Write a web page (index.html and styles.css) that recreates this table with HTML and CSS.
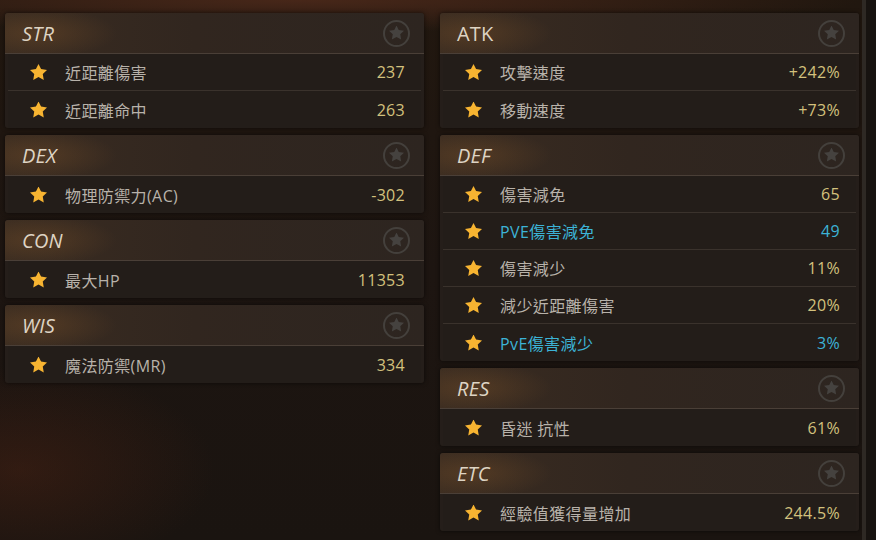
FILE: index.html
```html
<!DOCTYPE html>
<html lang="zh-Hant">
<head>
    <meta charset="UTF-8">
    <meta name="viewport" content="width=device-width, initial-scale=1.0">
    <title>能力值</title>
    <link rel="stylesheet" href="styles.css">
</head>
<body>
    <div class="screen">
        <main class="stats">
            <!-- Columna izquierda -->
            <div class="column">
                <section class="panel">
                    <div class="panel-head"><span class="title">STR</span><span class="fav"></span></div>
                    <div class="row"><span class="star"></span><span class="label">近距離傷害</span><span class="value">237</span></div>
                    <div class="row"><span class="star"></span><span class="label">近距離命中</span><span class="value">263</span></div>
                </section>
                <section class="panel">
                    <div class="panel-head"><span class="title">DEX</span><span class="fav"></span></div>
                    <div class="row"><span class="star"></span><span class="label">物理防禦力(AC)</span><span class="value">-302</span></div>
                </section>
                <section class="panel">
                    <div class="panel-head"><span class="title">CON</span><span class="fav"></span></div>
                    <div class="row"><span class="star"></span><span class="label">最大HP</span><span class="value">11353</span></div>
                </section>
                <section class="panel">
                    <div class="panel-head"><span class="title">WIS</span><span class="fav"></span></div>
                    <div class="row"><span class="star"></span><span class="label">魔法防禦(MR)</span><span class="value">334</span></div>
                </section>
            </div>

            <!-- Columna derecha -->
            <div class="column">
                <section class="panel">
                    <div class="panel-head"><span class="title upright">ATK</span><span class="fav"></span></div>
                    <div class="row"><span class="star"></span><span class="label">攻擊速度</span><span class="value">+242%</span></div>
                    <div class="row"><span class="star"></span><span class="label">移動速度</span><span class="value">+73%</span></div>
                </section>
                <section class="panel">
                    <div class="panel-head"><span class="title">DEF</span><span class="fav"></span></div>
                    <div class="row"><span class="star"></span><span class="label">傷害減免</span><span class="value">65</span></div>
                    <div class="row pve"><span class="star"></span><span class="label">PVE傷害減免</span><span class="value">49</span></div>
                    <div class="row"><span class="star"></span><span class="label">傷害減少</span><span class="value">11%</span></div>
                    <div class="row"><span class="star"></span><span class="label">減少近距離傷害</span><span class="value">20%</span></div>
                    <div class="row pve"><span class="star"></span><span class="label">PvE傷害減少</span><span class="value">3%</span></div>
                </section>
                <section class="panel">
                    <div class="panel-head"><span class="title">RES</span><span class="fav"></span></div>
                    <div class="row"><span class="star"></span><span class="label">昏迷 抗性</span><span class="value">61%</span></div>
                </section>
                <section class="panel">
                    <div class="panel-head"><span class="title">ETC</span><span class="fav"></span></div>
                    <div class="row"><span class="star"></span><span class="label">經驗值獲得量增加</span><span class="value">244.5%</span></div>
                </section>
            </div>
        </main>
        <div class="scroll-track"></div>
    </div>
</body>
</html>
```

FILE: styles.css
```css
body {
    margin: 0;
    font-family: 'Open Sans', 'Noto Sans CJK TC', sans-serif;
    background: #1b1410;
    overflow: hidden;
}

.screen {
    display: flex;
    width: 876px;
    height: 540px;
    background:
        radial-gradient(ellipse 260px 140px at 20px 470px, rgba(110, 45, 22, 0.28), transparent 75%),
        radial-gradient(ellipse 700px 40px at 300px 0, rgba(110, 55, 35, 0.5), transparent 80%),
        linear-gradient(180deg, #21170f 0%, #1d1511 50%, #1a1410 100%);
}

/* Rejilla principal */
.stats {
    flex: 1;
    display: grid;
    grid-template-columns: 419px 419px;
    column-gap: 16px;
    align-items: start;
    padding: 13px 0 0 5px;
}

.column {
    display: flex;
    flex-direction: column;
    gap: 7px;
}

.panel {
    background: rgba(38, 31, 27, 0.92);
    border-radius: 3px;
    box-shadow: 0 0 4px rgba(0, 0, 0, 0.6);
    padding: 0 3px;
}

.panel-head {
    height: 40px;
    display: flex;
    align-items: center;
    justify-content: space-between;
    padding: 0 14px 0 17px;
    margin: 0 -3px;
    border-radius: 3px 3px 0 0;
    border-bottom: 1px solid #4a3f37;
    background:
        radial-gradient(ellipse 100px 32px at 32px 20px, rgba(125, 82, 40, 0.38), transparent 80%),
        linear-gradient(90deg, #3a2c21 0%, #31261f 45%, #2d2520 100%);
}

.title {
    font-family: 'Open Sans', sans-serif;
    font-size: 20px;
    font-style: italic;
    color: #ded4c4;
    letter-spacing: 0.2px;
}

.title.upright {
    font-style: normal;
}

/* Icono de favorito en la cabecera */
.fav {
    width: 23px;
    height: 23px;
    border: 2px solid #44403c;
    border-radius: 50%;
    display: flex;
    align-items: center;
    justify-content: center;
}

.fav::before {
    content: '';
    width: 15px;
    height: 14px;
    margin-top: -1px;
    background: #45423f;
    clip-path: polygon(50% 0%, 65% 32%, 100% 37%, 75% 62%, 81% 100%, 50% 82%, 19% 100%, 25% 62%, 0% 37%, 35% 32%);
}

.row {
    height: 36px;
    display: flex;
    align-items: center;
    padding: 0 16px 0 22px;
    border-bottom: 1px solid #3a322c;
    background: #231d19;
}

.row:last-child {
    height: 37px;
    border-bottom: none;
}

.star {
    width: 17px;
    height: 16px;
    background: #f7b431;
    clip-path: polygon(50% 0%, 65% 32%, 100% 37%, 75% 62%, 81% 100%, 50% 82%, 19% 100%, 25% 62%, 0% 37%, 35% 32%);
    filter: drop-shadow(0 0 2px rgba(255, 170, 40, 0.6));
    flex-shrink: 0;
}

.label {
    flex: 1;
    margin-left: 18px;
    font-family: 'Open Sans', 'Noto Sans CJK TC', sans-serif;
    font-size: 16px;
    letter-spacing: 0.4px;
    color: #b8b2aa;
}

.value {
    font-size: 16px;
    letter-spacing: 0.3px;
    color: #d3c17d;
}

.pve .label,
.pve .value {
    color: #3cb3d6;
}

.scroll-track {
    width: 10px;
    border-left: 4px solid #2e2924;
    background: #171310;
}
```
